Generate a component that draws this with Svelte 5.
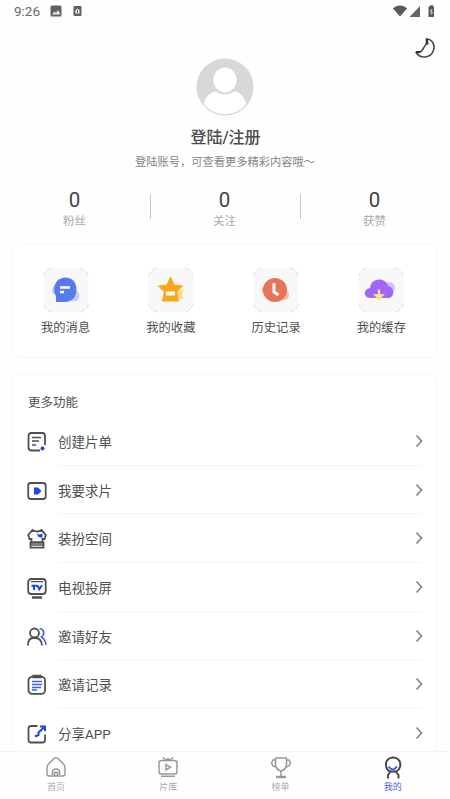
<!-- Mine.svelte -->
<script lang="ts">
    const stats = [
        { value: 0, label: '粉丝' },
        { value: 0, label: '关注' },
        { value: 0, label: '获赞' }
    ];

    const shortcuts = [
        { icon: 'message', label: '我的消息' },
        { icon: 'star', label: '我的收藏' },
        { icon: 'history', label: '历史记录' },
        { icon: 'cache', label: '我的缓存' }
    ];

    const menus = [
        { icon: 'create', label: '创建片单' },
        { icon: 'request', label: '我要求片' },
        { icon: 'dress', label: '装扮空间' },
        { icon: 'tv', label: '电视投屏' },
        { icon: 'invite', label: '邀请好友' },
        { icon: 'record', label: '邀请记录' },
        { icon: 'share', label: '分享APP' }
    ];

    const tabs = [
        { icon: 'home', label: '首页' },
        { icon: 'library', label: '片库' },
        { icon: 'rank', label: '榜单' },
        { icon: 'mine', label: '我的' }
    ];

    let activeTab = $state('mine');
</script>

<div class="page">
    <header class="status-bar">
        <span class="time">9:26</span>
        <svg class="picture" viewBox="0 0 12 12" width="12" height="12">
            <rect x="0.5" y="0.5" width="11" height="11" rx="1.5" fill="#606060"/>
            <path d="M2 9.5L4.5 6.5L6 8L8 5L10.5 9.5Z" fill="#e8e8e8"/>
        </svg>
        <svg class="app" viewBox="0 0 10 12" width="10" height="12">
            <rect x="0.5" y="1" width="8" height="10" rx="1" fill="#606060"/>
            <path d="M2.5 8.5V5.5L4.5 3.5L6.5 5.5V8.5Z" fill="#f4f4f4"/>
            <path d="M4.5 5V8" stroke="#606060"/>
        </svg>
        <svg class="signals" viewBox="0 0 44 14" width="44" height="14">
            <path d="M1 4.5C4.5 0.5 11.5 0.5 15 4.5L8 12.5Z" fill="#5a5a5a"/>
            <path d="M28 2V13H17.5Z" fill="#666"/>
            <path d="M37 2.5H38V1.2H41V2.5H42V13H36.5V2.5Z" fill="#5a5a5a"/>
            <path d="M40 5L38.5 8H40.3L39.3 10.5" stroke="#ddd" fill="none"/>
        </svg>
    </header>

    <section class="profile">
        <svg class="moon" viewBox="0 0 22 24" width="22" height="24">
            <path d="M12.7 3C18.8 3.5 21.4 9.5 19.3 15C16.6 21.7 6.8 23.6 2 16.5C5 17 7.5 15.5 9 13C10 10 13.6 9.5 12.7 3Z" fill="#fff" stroke="#4a4a4a" stroke-width="1.6" stroke-linejoin="round"/>
            <path d="M2 16L6.5 16M12.7 2.5L13.5 8.5" stroke="#333" stroke-width="2.2"/>
        </svg>
        <svg class="avatar" viewBox="0 0 58 58" width="58" height="58">
            <defs>
                <clipPath id="avatar-clip"><circle cx="29" cy="29" r="27.2"/></clipPath>
            </defs>
            <circle cx="29" cy="29" r="28.5" fill="#d8d8d8"/>
            <g clip-path="url(#avatar-clip)" fill="#fff">
                <ellipse cx="29" cy="22" rx="11.5" ry="12.5"/>
                <path d="M8 46C9 39.5 14 34 19.5 33.5Q29 39.5 38.5 33.5C44 34 49 39.5 50 46L47 58H11Z"/>
            </g>
        </svg>
        <h1>登陆/注册</h1>
        <p>登陆账号，可查看更多精彩内容哦～</p>
        <div class="stats">
            {#each stats as stat}
                <div class="stat">
                    <span class="num">{stat.value}</span>
                    <span class="stat-label">{stat.label}</span>
                </div>
            {/each}
        </div>
    </section>

    <section class="card shortcuts">
        {#each shortcuts as item}
            <div class="shortcut">
                <svg viewBox="0 0 46 46" width="46" height="46">
                    <rect x="0.5" y="0.5" width="45" height="45" rx="12" fill="#f8f8f8"/>
                    <path d="M0.5 9Q2.5 3 9 0.7M37 0.7Q43.5 3 45.5 9M45.5 37Q43.5 43 37 45.3M9 45.3Q2.5 43 0.5 37" fill="none" stroke="#dcdcdc" stroke-dasharray="5 1.5"/>
                    {#if item.icon === 'message'}
                        <circle cx="31" cy="29" r="5.5" fill="#c9cdfb"/>
                        <circle cx="14" cy="23" r="5" fill="#b4c8fb"/>
                        <path d="M13 35V29C9 22 12 11 22 10.5C30 10.5 33.5 16 33.5 22.5C33.5 30 29 35 22 35Z" fill="#557bee"/>
                        <path d="M17 20.5H27M17 25H21" stroke="#fff" stroke-width="2.6"/>
                    {:else if item.icon === 'star'}
                        <path d="M29 24L36 22L34 27L35 32L29 31Z" fill="#fbdc83"/>
                        <path d="M22.5 10L26 18L34.5 19L28.5 25L30.5 34H14.5L16.5 25L10.5 19L19 18Z" fill="#faa51a" stroke="#faa51a" stroke-linejoin="round"/>
                        <path d="M18 24.5H27V28.5H18Z" fill="#fff"/>
                    {:else if item.icon === 'history'}
                        <circle cx="31" cy="28" r="5" fill="#f9b9a4"/>
                        <circle cx="13" cy="23" r="4" fill="#f5ad98"/>
                        <circle cx="22" cy="23" r="12" fill="#ea7259"/>
                        <path d="M21 16V25L25.5 28" fill="none" stroke="#fff" stroke-width="3"/>
                    {:else}
                        <circle cx="31" cy="21" r="6" fill="#d8bffc"/>
                        <path d="M12 31C5 31 5 22 12 21C13 10 28 10 30 19C37 20 37 31 30 31Z" fill="#a066f7"/>
                        <path d="M21 22.5V28H17.5L21 32L24.5 28H21" fill="#fdd86a" stroke="#fdd86a" stroke-width="2.2"/>
                        <path d="M21 23V27M19 28L21 30.5L23 28" fill="none" stroke="#fff6d8"/>
                    {/if}
                </svg>
                <span>{item.label}</span>
            </div>
        {/each}
    </section>

    <section class="card menu">
        <h2>更多功能</h2>
        {#each menus as item}
            <div class="menu-row">
                <svg class="menu-icon" viewBox="0 0 20 22" width="20" height="22">
                    {#if item.icon === 'create'}
                        <path d="M13 19.5H4.5Q1.5 19.5 1.5 16.5V5Q1.5 2 4.5 2H15.5Q18 2 18 5V14"/>
                        <path class="thin" d="M5 6.5H14M5 10H12M5 14H9"/>
                        <circle class="dot" cx="15.5" cy="17.5" r="2"/>
                    {:else if item.icon === 'request'}
                        <rect x="1.2" y="3" width="17.5" height="16" rx="2.5"/>
                        <path class="dot" d="M7 7.5L11 7.5L14.5 11L11 14.5L7 14.5Z"/>
                    {:else if item.icon === 'dress'}
                        <path d="M5.5 2Q10 5 14.5 2L18.8 7L17.5 11H15.5V14.5H4.5V11H2.5L1.2 7Z"/>
                        <path d="M3.5 14.5H16.5V19.7H3.5Z"/>
                        <path class="thin" d="M4 17H16"/>
                        <path class="dot" d="M10 5.5L12.5 6.5L15.5 5.5V9.5H13L11 8.5Z"/>
                    {:else if item.icon === 'tv'}
                        <rect x="1.2" y="2" width="17.5" height="15" rx="3"/>
                        <path class="thin" d="M4 4.7H16"/>
                        <path class="bold" d="M5 20.5H15"/>
                        <path class="blue tv" d="M4.5 8.8H10M7 8.5V13M10.3 8.3L12.3 12.3L15 8.3"/>
                    {:else if item.icon === 'invite'}
                        <circle cx="7.5" cy="7" r="4.5"/>
                        <path d="M1 19.5C1 14.5 3 12 6 12H9C12 12 15 15 15 19.5"/>
                        <path class="blue" d="M12.5 2.5C17.5 3 18 8.5 14.5 11C17 12.5 18.5 15 19 19"/>
                    {:else if item.icon === 'record'}
                        <rect x="1.5" y="2.8" width="16.5" height="17" rx="3.5"/>
                        <path class="thin" d="M6 1.5H14V3.5H6Z"/>
                        <path class="blue" d="M5 7.5H15M5 10.5H15M5 13.5H14M5 16H10"/>
                    {:else}
                        <path d="M10.5 3H4Q1.5 3 1.5 5.5V17Q1.5 19.5 4 19.5H15.5Q18 19.5 18 17V11.5"/>
                        <path class="blue arrow" d="M8 13.5L11.5 12V9.5L17 4.5M13 3.5H18V8"/>
                    {/if}
                </svg>
                <div class="menu-body">
                    <span>{item.label}</span>
                    <svg class="chevron" viewBox="0 0 8 14" width="8" height="14">
                        <path d="M1.5 1.5L6.5 7L1.5 12.5"/>
                    </svg>
                </div>
            </div>
        {/each}
    </section>

    <nav class="tab-bar">
        {#each tabs as tab}
            <button class:active={tab.icon === activeTab} onclick={() => (activeTab = tab.icon)}>
                <svg viewBox="0 0 22 23" width="22" height="23">
                    {#if tab.icon === 'home'}
                        <path d="M4 20Q2 20 2 17V12Q2 9 4.5 7L9 2.5Q11 1 13 2.5L17.5 7Q20 9 20 12V17Q20 20 18 20Z"/>
                        <path d="M7.5 19V16Q7.5 13 11 13Q14.5 13 14.5 16V19M9.5 20V16.5H12.5V20"/>
                    {:else if tab.icon === 'library'}
                        <rect x="2" y="4.5" width="18" height="13.5" rx="2.5"/>
                        <path d="M6 1.5L9 4.5L11 2.5L13 4.5L16 1.5M9 8.5V14L13.5 11.2ZM4 20.2H18"/>
                    {:else if tab.icon === 'rank'}
                        <path d="M5.5 2H16.5V9Q15.5 14 11 15Q6.5 14 5.5 9ZM5.5 4H3L1.5 7L3 10L6 11M16.5 4H19L20.5 7L19 10L16 11M11 15V20"/>
                        <path class="base" d="M6 21H16"/>
                    {:else}
                        <path d="M8 15.5C3 13.5 2.7 5.5 6.5 3C10.5 0.2 15.5 1.5 17.5 5C19.3 9 18 13.5 14.5 15.5ZM8.5 15.5L6 19V22.5M13.5 15.5L16.5 19V22.5"/>
                        <path class="smile" d="M6.5 10.5L8.5 12.5Q11 14.5 13 12.5L15 10.5"/>
                    {/if}
                </svg>
                <span>{tab.label}</span>
            </button>
        {/each}
    </nav>
</div>

<style>
    :global(body) {
        background: #fdfdfd;
    }

    .page {
        height: 799px;
        width: 449px;
        display: flex;
        flex-direction: column;
        overflow: hidden;
        background: #fefefe;
        font-family: Roboto, "Noto Sans CJK SC", sans-serif;
        color: #505050;
    }

    .status-bar {
        height: 24px;
        flex: none;
        display: flex;
        align-items: center;
        padding: 0 13px 2px 14px;
        box-sizing: border-box;
    }

    .time {
        width: 36px;
        font-size: 13.5px;
        color: #6a6a6a;
    }

    .picture {
        margin-right: 11px;
    }

    .signals {
        margin-left: auto;
    }

    .profile {
        position: relative;
        height: 222px;
        flex: none;
        display: flex;
        flex-direction: column;
        align-items: center;
        padding-top: 34px;
        box-sizing: border-box;
    }

    .moon {
        position: absolute;
        top: 12px;
        right: 13px;
    }

    .avatar {
        flex: none;
        margin-left: 1px;
    }

    h1 {
        margin: 11px 0 0 2px;
        font-size: 16px;
        line-height: 22px;
        font-weight: 500;
        color: #4c4c4c;
    }

    p {
        margin: 6px 0 0 1px;
        font-size: 11.25px;
        line-height: 16px;
        color: #858585;
        white-space: nowrap;
    }

    .stats {
        display: flex;
        width: 450px;
        margin-top: 17px;
    }

    .stat {
        position: relative;
        flex: 1;
        display: flex;
        flex-direction: column;
        align-items: center;
    }

    .stat + .stat::before {
        content: "";
        position: absolute;
        left: 0;
        top: 6px;
        width: 1px;
        height: 25px;
        background: #c8c8c8;
    }

    .num {
        font-size: 20.5px;
        line-height: 25px;
        color: #444;
    }

    .stat-label {
        font-size: 11.5px;
        line-height: 17px;
        color: #aaa;
    }

    .card {
        margin: 0 13px;
        border-radius: 8px;
        background: #fff;
        box-shadow: 0 0 5px rgba(0, 0, 0, 0.05);
    }

    .shortcuts {
        display: flex;
        height: 110px;
        flex: none;
        padding: 21px 2px 0 0;
        box-sizing: border-box;
    }

    .shortcut {
        flex: 1;
        display: flex;
        flex-direction: column;
        align-items: center;
        gap: 6px;
        font-size: 12.3px;
        line-height: 18px;
    }

    .menu {
        flex: 1;
        min-height: 0;
        margin-top: 19px;
        padding: 18px 13px 0 14px;
        overflow: hidden;
    }

    h2 {
        margin: 0 0 4px 1px;
        font-size: 12.5px;
        line-height: 20px;
        font-weight: 400;
    }

    .menu-row {
        display: flex;
        align-items: center;
        height: 48.7px;
    }

    .menu-icon {
        flex: none;
        margin: 1px 11px 0 0;
        fill: none;
        stroke: #505050;
        stroke-width: 1.8;
    }

    .menu-icon .thin {
        stroke-width: 1.3;
    }

    .menu-icon .bold {
        stroke-width: 2.6;
    }

    .menu-icon .dot {
        fill: #1e43ff;
        stroke: none;
    }

    .menu-icon .blue {
        stroke: #3b63ff;
        stroke-width: 1.6;
    }

    .menu-icon .arrow,
    .menu-icon .tv {
        stroke: #1e43ff;
        stroke-width: 2;
    }

    .menu-body {
        flex: 1;
        height: 100%;
        display: flex;
        align-items: center;
        justify-content: space-between;
        border-bottom: 1px solid #f5f5f5;
        box-sizing: border-box;
        font-size: 13.5px;
    }

    .chevron {
        fill: none;
        stroke: #858585;
        stroke-width: 1.7;
    }

    .tab-bar {
        flex: none;
        display: flex;
        height: 48px;
        border-top: 1px solid #f3f3f3;
        box-sizing: border-box;
        background: #fefefe;
    }

    .tab-bar button {
        flex: 1;
        display: flex;
        flex-direction: column;
        align-items: center;
        padding: 4px 0 0;
        border: none;
        background: none;
        font-family: inherit;
        font-size: 9px;
        line-height: 16px;
        color: #aaa;
    }

    .tab-bar svg {
        flex: none;
        fill: none;
        stroke: #999;
        stroke-width: 1.5;
    }

    .tab-bar .base {
        stroke-width: 2.4;
    }

    .tab-bar .active {
        color: #4c67ff;
    }

    .tab-bar .active svg {
        stroke: #444;
        stroke-width: 1.9;
    }

    .tab-bar .smile {
        stroke: #3b63ff;
    }
</style>
